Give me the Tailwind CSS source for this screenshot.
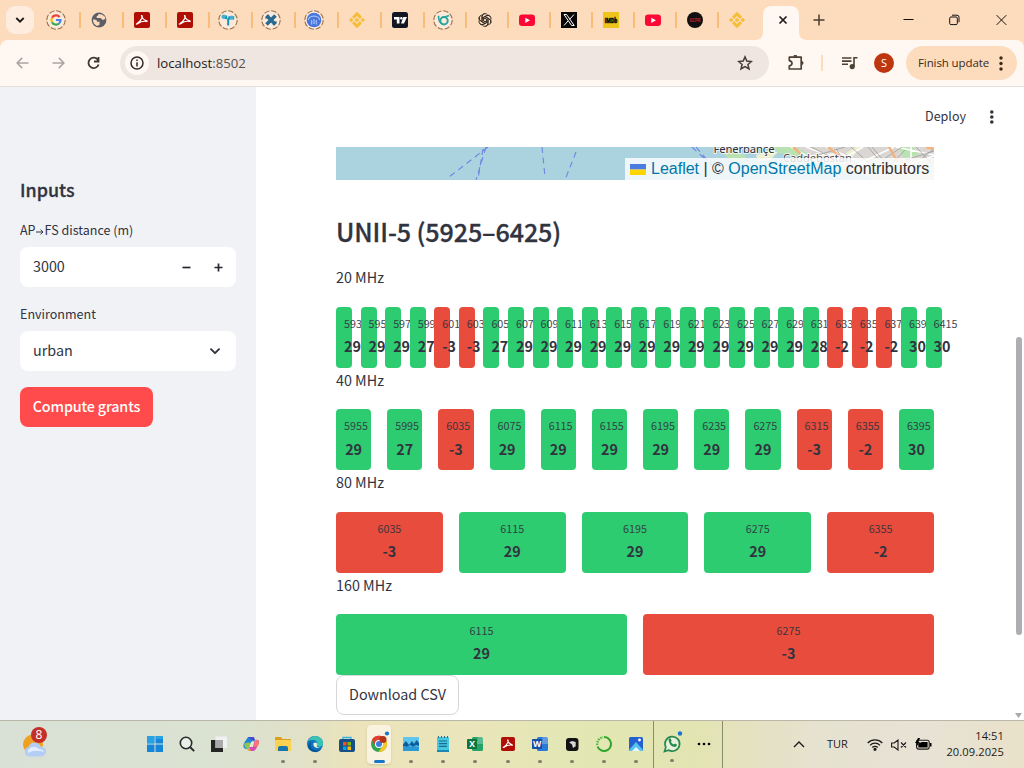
<!DOCTYPE html>
<html lang="en">
<head>
<meta charset="utf-8">
<title>localhost:8502</title>
<script src="https://cdn.jsdelivr.net/npm/@tailwindcss/browser@4"></script>
</head>
<body class="w-[1024px] h-[768px] overflow-hidden flex flex-col bg-white text-[#31333f] font-['Noto_Sans_CJK_SC',sans-serif]">

<!-- Tab strip -->
<div class="h-10 shrink-0 bg-[#fddcbd] flex items-center pl-1.5 font-['Open_Sans',sans-serif]">
  <div class="w-7 h-7 mr-1 rounded-[9px] bg-[#feecdf] flex items-center justify-center">
    <svg width="10" height="8" viewBox="0 0 10 8" fill="none" stroke="#1d1b19" stroke-width="1.9"><path d="M1.3 2 5 5.6 8.700 2"/></svg>
  </div>
  <div id="tabs" class="flex"></div>
  <div class="h-10 w-[52px] -ml-px">
    <svg width="52" height="40" viewBox="0 0 52 40"><path fill="#fff7f2" d="M0 40C5 40 8 37 8 32V15Q8 6 17 6H35Q44 6 44 15V32C44 37 47 40 52 40Z"/><path d="m24.500 16.500 7 7m0-7-7 7" stroke="#1f1b18" stroke-width="1.700"/></svg>
  </div>
  <svg class="ml-1.5" width="12" height="12" viewBox="0 0 12 12" stroke="#4a3d30" stroke-width="1.500"><path d="M6 .5v11M.5 6h11"/></svg>
  <div class="flex items-center ml-auto pr-[17px]">
    <svg class="mr-[35px]" width="11" height="12" viewBox="0 0 11 12" stroke="#111"><path d="M.5 5.500h10"/></svg>
    <svg class="mr-9" width="11" height="12" viewBox="0 0 11 12" fill="none" stroke="#111"><rect x=".7" y="3" width="7.600" height="7.600" rx="1.200"/><path d="M3 1.200h5q2 0 2 2v5"/></svg>
    <svg width="11" height="12" viewBox="0 0 11 12" stroke="#111"><path d="m.6 1.200 9.700 9.700m0-9.700L.6 10.900"/></svg>
  </div>
</div>

<!-- Address bar -->
<div class="bg-[#fddcbd] shrink-0">
<div class="h-[47px] bg-[#fff7f2] rounded-t-lg border-b border-[#e8dfd9] flex items-center font-['Open_Sans',sans-serif]">
  <svg class="ml-4" width="13" height="12" viewBox="0 0 13 12" fill="none" stroke="#aaa4a0" stroke-width="1.500"><path d="M12.500 6H1.200M6.200.9 1.100 6l5.100 5.100"/></svg>
  <svg class="ml-[23px]" width="13" height="12" viewBox="0 0 13 12" fill="none" stroke="#aaa4a0" stroke-width="1.500"><path d="M.5 6h11.300M6.800.9 11.900 6l-5.100 5.100"/></svg>
  <svg class="ml-[22px]" width="13" height="14" viewBox="0 0 13 14" fill="none" stroke="#3f362f" stroke-width="1.800"><path d="M11 4A5.200 5.200 0 1 0 11.600 8.500M11.500 1v4.500H7"/></svg>
  <div class="ml-5 w-[649px] h-[34px] rounded-full bg-[#efe6e2] flex items-center pl-[5px] pr-4">
    <div class="w-6 h-6 rounded-full bg-[#fff7f2] flex items-center justify-center">
      <svg width="14" height="14" viewBox="0 0 14 14" fill="none" stroke="#322b27" stroke-width="1.500"><circle cx="7" cy="7" r="6"/><path d="M7 6.200v4.200M7 3.600v1.500"/></svg>
    </div>
    <span class="ml-2 text-[13.200px] leading-5 text-[#1f1b18]">localhost<span class="text-[#55504c]">:8502</span></span>
    <svg class="ml-auto" width="16" height="16" viewBox="0 0 16 16" fill="none" stroke="#453c36" stroke-width="1.500" stroke-linejoin="miter"><path d="m8 1.900 1.800 4.200 4.600.4-3.500 3 1.100 4.500L8 11.600 4 14l1.100-4.500-3.500-3 4.600-.4z"/></svg>
  </div>
  <svg class="ml-[19px]" width="17" height="17" viewBox="0 0 17 17"><path fill="none" stroke="#4d4034" stroke-width="1.700" stroke-linejoin="round" d="M1.300 2.200H13.200V14H1.300V10.800Q4 10.300 4 8.200T1.300 5.600Z"/><path fill="#4d4034" d="M5.300 1.800a2 2 0 0 1 4 0zM13.500 6a2 2 0 0 1 0 4z"/></svg>
  <div class="ml-4 w-0.5 h-4 bg-[#fddcbd]"></div>
  <svg class="ml-[19px]" width="16" height="13" viewBox="0 0 16 13"><path fill="none" stroke="#4d4034" stroke-width="1.600" d="M0 1h9.500M0 4.100h9.500M0 7.200h6M12 9.500V.8h3.500"/><circle cx="10.200" cy="9.600" r="2.600" fill="#4d4034"/></svg>
  <div class="ml-4 w-5 h-5 rounded-full bg-[#bd360f] text-white text-[11px] leading-5 text-center">S</div>
  <div class="ml-3 w-[111px] h-[34px] rounded-full bg-[#fddcbd] flex items-center pl-3 text-[#3a2a1a]">
    <span class="text-[11.500px] tracking-[-0.1px] whitespace-nowrap w-[81px]">Finish update</span>
    <svg width="4" height="15" viewBox="0 0 4 15" fill="#3a2a1a"><circle cx="2" cy="2" r="1.700"/><circle cx="2" cy="7.500" r="1.700"/><circle cx="2" cy="13" r="1.700"/></svg>
  </div>
</div>
</div>

<!-- Page -->
<div class="h-[633px] shrink-0 flex overflow-hidden">
  <aside class="w-64 shrink-0 bg-[#f0f2f6] px-5 pt-[88px]">
    <h2 class="text-[17.900px] leading-7 font-medium [-webkit-text-stroke:0.3px]">Inputs</h2>
    <p class="mt-4 text-[12.540px] leading-[22px]">AP<span class="inline-flex w-[9px] justify-center"><svg width="8" height="6" viewBox="0 0 8 6" fill="none" stroke="#31333f"><path d="M0 3h7M4.500.6 7 3 4.500 5.400"/></svg></span>FS distance (m)</p>
    <div class="mt-1.5 h-10 rounded-lg bg-white flex items-center pl-[13px] pr-[13px] text-[14.330px]">
      <span class="pb-0.5">3000</span>
      <svg class="ml-auto" width="9" height="9" viewBox="0 0 9 9" stroke="#262730" stroke-width="1.700"><path d="M.5 4.500h8"/></svg>
      <svg class="ml-[23px]" width="9" height="9" viewBox="0 0 9 9" stroke="#262730" stroke-width="1.700"><path d="M.5 4.500h8M4.500.5v8"/></svg>
    </div>
    <p class="mt-4 text-[12.540px] leading-[22px]">Environment</p>
    <div class="mt-1.5 h-10 rounded-lg bg-white flex items-center pl-[13px] pr-4 text-[14.330px]">
      <span class="pb-0.5">urban</span>
      <svg class="ml-auto" width="10" height="7" viewBox="0 0 10 7" fill="none" stroke="#31333f" stroke-width="1.900" stroke-linecap="round" stroke-linejoin="round"><path d="M1 1.200 5 5.200 9 1.200"/></svg>
    </div>
    <button class="mt-4 w-[133px] h-10 pb-0.5 rounded-lg bg-[#ff4b4b] text-white text-[14.330px] tracking-[-0.15px] font-medium whitespace-nowrap">Compute grants</button>
  </aside>

  <main class="w-[758px] shrink-0 pl-20 pr-20">
    <header class="h-[60px] -mr-[62px] flex items-center justify-end text-[12.540px]">
      <span class="pb-0.5">Deploy</span>
      <svg class="ml-[23px] mr-0.5" width="5" height="14" viewBox="0 0 5 14" fill="#31333f"><circle cx="2.800" cy="2" r="1.800"/><circle cx="2.800" cy="7" r="1.800"/><circle cx="2.800" cy="12" r="1.800"/></svg>
    </header>

    <div class="relative w-[598px] h-[33px] overflow-hidden">
      <svg width="598" height="33" viewBox="0 0 598 33">
        <rect width="598" height="33" fill="#aad3df"/>
        <g fill="none" stroke="#7182e2" stroke-width="1.100" stroke-dasharray="6 4.500"><path d="M152 0 113 30M150 0 140 33M147 2 142 32M206 0 209 30M240 5 229 33M356 0 370 13M360 0 384 28"/></g>
        <path fill="#d9d6d3" d="M440 0H598V33H540L520 24 492 17 480 13 465 5 452 3Z"/>
        <path fill="#b9e2b3" d="M436 0h24l16 9-9 3-14-4-10-2zM388 7l12-3 10 5-4 6-12-2zM562 1l14-2 8 9-16 3z"/>
        <path fill="#edf0cf" d="m420 8 12-4 10 1-8 8-12 1zM510 6l10-6 5 0-10 12z"/>
        <g fill="none" stroke="#fff" stroke-width="1.500"><path d="M470 0l35 13 22-13M490 0l50 22M520 18l38-18M540 13l30 5 28-9M560 0l38 8M575 0v18M455 0l16 9 29-2"/></g>
        <g fill="none" stroke="#96928f" stroke-width=".7"><path d="M475 0l30 15M482 8l27-8M532 0l12 14M536 0l12 14M548 12l18-12M570 13l28-9M580 0l16 17M556 17l13-14M500 2l8 12M515 0l18 16M585 12l13-10"/></g>
        <g fill="none" stroke="#f3b27c" stroke-width="2.500"><path d="M457 0l9 8M492 0l14 11M553 0l8 14M590 0l8 2"/></g>
        <g fill="#2e3034" stroke="#fff" stroke-width="1.800" stroke-opacity=".8" paint-order="stroke" font-family="Noto Sans, sans-serif" font-size="11.300"><text x="377.500" y="5.500" textLength="61">Fenerbahçe</text><text x="447" y="14.500" textLength="69" fill="#4d4848">Caddebostan</text></g>
      </svg>
      <div class="absolute right-0 bottom-0 w-[309px] h-[22px] bg-white/80 flex items-center pl-[5px] font-['Liberation_Sans',sans-serif] text-[16px] leading-[22px] whitespace-nowrap text-[#333]">
        <svg class="mr-[5px]" width="16" height="11" viewBox="0 0 16 11"><path fill="#4c7be1" d="M0 0h16v5.500H0z"/><path fill="#ffd500" d="M0 5.500h16V11H0z"/></svg>
        <span><span class="text-[#0078a8]">Leaflet</span> | © <span class="text-[#0078a8]">OpenStreetMap</span> contributors</span>
      </div>
    </div>

    <h3 class="mt-[35.800px] mb-4 h-[33.600px] text-[25.080px] leading-[31.600px] tracking-[-0.1px] font-medium [-webkit-text-stroke:0.3px] whitespace-nowrap">UNII-5 (5925–6425)</h3>
    <div id="bands"></div>
    <button class="w-[123px] h-10 pb-0.5 rounded-lg border border-[#d6d6d9] bg-white text-[14.330px] whitespace-nowrap">Download CSV</button>
  </main>

  <div class="w-2.5 flex flex-col items-center pt-[250px] pr-px">
    <div class="w-1.5 h-[298px] rounded-full bg-[#adadb2]"></div>
    <svg class="mt-[78px]" width="7" height="5" viewBox="0 0 7 5" fill="#aaa"><path d="M0 0h7L3.500 5z"/></svg>
  </div>
</div>

<!-- Taskbar -->
<div class="h-12 shrink-0 border-t border-[#b9b8a8] bg-[linear-gradient(90deg,#d9e1d6_0%,#dbe2d1_22%,#e0e1c8_29%,#ece3ba_35%,#ebe5bb_45%,#e2e7b4_56%,#e2e5b2_68%,#e5e1c2_74%,#e6e2d0_80%,#e7e2d5_90%,#e9e1c9_100%)] flex font-['Open_Sans',sans-serif] text-[#1b1b1b]">
  <div class="w-[139px] pl-[22px] pt-[5px]">
    <svg width="28" height="34" viewBox="0 0 28 34"><circle cx="11" cy="18.500" r="10" fill="#f0a021"/><path fill="#b4cdf5" d="M7 30.500a5 5 0 0 1-.3-9.800 6.500 6.500 0 0 1 12-.2 5 5 0 0 1 .6 10z"/><path fill="#e2ecff" d="M6 24q5-6 11-1 4 0 5 3-9-3-16 1z"/><circle cx="17" cy="9" r="8" fill="#c23028"/><text x="17" y="13.300" font-size="12" fill="#fff" text-anchor="middle" font-family="Open Sans, sans-serif">8</text></svg>
  </div>
  <div id="dock" class="flex"></div>
  <div class="ml-px w-[70px] border-x border-[#8b8b70] flex">
    <div class="w-9 flex flex-col items-center pt-2.5">
      <svg class="overflow-visible" width="18" height="26" viewBox="0 0 18 26"><path d="m1.500 20.500 1.300-4.300a7.300 7.300 0 1 1 2.700 2.900z" fill="#e8f1db" stroke="#258a50" stroke-width="1.700"/><path fill="#258a50" d="M5.500 8.500q1-2 2.200-.7l1 2-.8 1.300q1 1.900 2.900 2.500l1.200-1 2 1.200q.2 2-2.400 2.200-5.500-.8-6.100-7.500"/><circle cx="17" cy="2.500" r="2.200" fill="#1876d0"/></svg>
      <div class="w-1 h-[3px] rounded bg-[#807f6c] mt-[2px]"></div>
    </div>
    <svg class="mt-[21px] ml-[7px]" width="14" height="4" viewBox="0 0 14 4"><circle cx="2" cy="2" r="1.300"/><circle cx="7" cy="2" r="1.300"/><circle cx="12" cy="2" r="1.300"/></svg>
  </div>
  <div class="ml-auto pr-5 flex items-center">
    <svg width="12" height="7" viewBox="0 0 12 7" fill="none" stroke="#1b1b1b" stroke-width="1.400"><path d="m1 6 5-5 5 5"/></svg>
    <span class="ml-[22px] text-[11px] w-[24px]">TUR</span>
    <svg class="ml-4" width="16" height="13" viewBox="0 0 16 13" fill="none" stroke="#1b1b1b" stroke-width="1.200"><path d="M.7 5a10.300 10.300 0 0 1 14.600 0M3 7.300a7 7 0 0 1 10 0M5.300 9.500a3.800 3.800 0 0 1 5.400 0"/><circle cx="8" cy="11.300" r="1" fill="#1b1b1b"/></svg>
    <svg class="ml-2" width="16" height="12" viewBox="0 0 16 12" fill="none" stroke="#1b1b1b" stroke-width="1.100"><path d="M.6 4h2.600L7 1v10L3.200 8H.6zM10 3.500l5 5m0-5-5 5"/></svg>
    <svg class="ml-2" width="17" height="13" viewBox="0 0 17 13"><rect x="1.600" y="2.300" width="12.600" height="8.800" rx="2" fill="none" stroke="#1b1b1b" stroke-width="1.100"/><path d="M3.300 5.500 7 4h5.600v5.500H3.300zM15 5h1.500v3.500H15zM3 0 0 5h2l-1 4 4-5H3.500L5 0z"/></svg>
    <div class="ml-[13px] pb-0.5 w-[59px] text-right text-[11.100px] leading-4 tracking-[0.1px] whitespace-nowrap"><div>14:51</div><div class="-ml-2">20.09.2025</div></div>
  </div>
</div>

<script>
const dashed = c => `<circle cx="10" cy="10" r="9.200" fill="#fdeadb" stroke="#98704a" stroke-width="1.100" stroke-dasharray="5.500 1.700"/>${c}`;
const pdf = '<rect x="2" y="2" width="16" height="16" rx="2" fill="#b00d05"/><path d="M9.500 5.500c2 0 0 5.500-5 8.500 1 1 3-4 10.500-2.500 1-1-5-1-5.500-6z" fill="none" stroke="#fff" stroke-width="1.200"/>';
const bnb = '<g fill="#f3bf3a"><path d="m10 1.800 5 5-2.100 2.100L10 6 7.100 8.900 5 6.800zM10 18.200l5-5-2.100-2.100L10 14l-2.900-2.900L5 13.200zM10 7.700l2.300 2.300-2.300 2.300L7.700 10zM4.200 7.800 6.400 10l-2.200 2.200L2 10zM15.800 7.800 18 10l-2.200 2.200-2.200-2.200z"/></g>';
const yt = '<rect x="2" y="4.500" width="16" height="11.500" rx="3.200" fill="#fb0836"/><path d="m8.300 7.700 4.700 2.600-4.700 2.600z" fill="#fff"/>';
const petals = [0,60,120,180,240,300].map(a => `<path transform="rotate(${a} 10 10)" d="M6.400 12V6.200q0-2.700 2.800-3.500 2.400-.4 3.800 1.300M8.300 11V7.200l3.700-2.100q2.700-1.200 4.300 1"/>`).join('');
const tabs = [
 dashed('<g fill="none" stroke-width="2.200"><path d="M13.700 7.200A4.600 4.600 0 0 0 6 7.800" stroke="#ea4335"/><path d="M6 7.800a4.600 4.600 0 0 0 0 4.400" stroke="#fbbc05"/><path d="M6 12.200a4.600 4.600 0 0 0 7 1.300" stroke="#34a853"/><path d="M13 13.500q1.600-1.500 1.500-3.500H10" stroke="#4285f4"/></g>'),
 '<circle cx="10" cy="10" r="7.400" fill="#5c5f66"/><path fill="#fddcbd" d="M4 9.500q4-.5 4 2.300h2.500v3L8 16Q4 14 4 9.500M9.500 4q0 2-1.800 2.200v1.900h4l2 1.800 2.500-1V7L13 4.500z"/>',
 pdf, pdf,
 dashed('<path d="M3.800 8.200V5.500h5.400v10h2V9.500h5V6.300h-5.500l-1.500 3" fill="#1492b8"/><circle cx="5.700" cy="6.500" r="2" fill="#47b1d0"/><circle cx="13.600" cy="7.500" r="2" fill="#47b1d0"/>'),
 dashed('<path d="m5.500 5.500 9 9M14.500 5.500l-9 9" stroke="#286b92" stroke-width="3.600"/><path d="M4.500 8.500 8 5M12 15l3.500-3.500" stroke="#286b92" stroke-width="1.500"/>'),
 dashed('<circle cx="10" cy="10" r="7.300" fill="#4776dd"/><path d="M4.500 10q0-3.500 5.500-4 5.500.5 5.500 4M7.700 14.500V10M12.300 14.500V10M10 14V9" fill="none" stroke="#aec6ff" stroke-width="1.100"/>'),
 bnb,
 '<rect x="2" y="2" width="16" height="16" rx="2.500" fill="#131722"/><path d="M4 7h5.500v6.500H6.800V9.500H4zM13.300 7H17l-3 6.500h-3z" fill="#fff"/><circle cx="11.300" cy="8.200" r="1.200" fill="#fff"/>',
 dashed('<circle cx="11" cy="10.800" r="3.700" fill="none" stroke="#26a6a2" stroke-width="2"/><path d="M5.500 5.800q0 7 4.500 8.500M10 7.500q3.500-1 6-2" fill="none" stroke="#26a6a2" stroke-width="1.700"/>'),
 `<g fill="none" stroke="#2c2620" stroke-width="1" transform="translate(1.300 1.300) scale(.87)">${petals}</g>`,
 yt,
 '<path d="M2 2h16v16H2z" fill="#070707"/><path d="M5 4.500h2.600l7.600 11h-2.600zM15 4.500l-4.500 5M9 11l-4 4.500" fill="none" stroke="#fff" stroke-width="1"/>',
 '<path d="M2 2h16v16H2z" fill="#f0c51b"/><text x="3.800" y="12.500" font-size="6.500" font-weight="900" textLength="12.400" lengthAdjust="spacingAndGlyphs" font-family="Roboto" stroke="#111" stroke-width=".4">IMDb</text>',
 yt,
 '<circle cx="10" cy="10" r="8" fill="#111"/><text x="4.500" y="11.800" font-size="4.500" font-weight="700" textLength="11" lengthAdjust="spacingAndGlyphs" font-family="Roboto" fill="#bd2430">GCPR</text>',
 bnb];
document.getElementById('tabs').innerHTML = tabs.map((s, i) =>
 `<div class="${i < 9 ? 'w-[43px]' : i < 16 ? 'w-[42px]' : 'w-[37px]'} h-5 pl-2 flex items-center justify-between"><svg width="20" height="20" viewBox="0 0 20 20">${s}</svg>${i < 16 ? '<i class="w-0.5 h-4 bg-[#f8be79]"></i>' : ''}</div>`).join('');

const bands = [
 ['20 MHz', 5935, 20, [29,29,29,27,-3,-3,27,29,29,29,29,29,29,29,29,29,29,29,29,28,-2,-2,-2,30,30]],
 ['40 MHz', 5955, 40, [29,27,-3,29,29,29,29,29,29,-3,-2,30]],
 ['80 MHz', 6035, 80, [-3,29,29,29,-2]],
 ['160 MHz', 6115, 160, [29,-3]]];
document.getElementById('bands').innerHTML = bands.map(([name, start, step, vals]) =>
 `<p class="h-[25.600px] leading-[23.200px] mb-4 text-[14.330px]">${name}</p><div class="flex gap-4 w-[598px]">` + vals.map((v, i) =>
 `<div class="flex-1 basis-0 min-w-0 isolate"><div class="min-w-4 h-[60.800px] rounded p-2 flex flex-col text-center ${v < 0 ? 'bg-[#e74c3c]' : 'bg-[#2ecc71]'}"><span class="text-[10.750px] h-[19.200px] leading-[17px] opacity-90">${start + i * step}</span><b class="text-[14.330px] h-[25.600px] leading-[23.400px] font-bold whitespace-nowrap">${v}</b></div></div>`).join('') + '</div>').join('');

const win = (a, b, t) => `<rect x="6" y="2" width="11" height="14" rx="1.500" fill="${a}"/><path d="M11.500 2H17v7H6v-3h5.500z" fill="#fff" fill-opacity=".25"/><rect x="1" y="4" width="10" height="10" rx="1" fill="${b}"/><text x="6" y="12" font-size="8.500" font-weight="700" fill="#fff" text-anchor="middle" font-family="Open Sans">${t}</text>`;
const dock = [
 ['<path d="M1 1h7.500v7.500H1zM9.500 1H17v7.500H9.500zM1 9.500h7.500V17H1zM9.500 9.500H17V17H9.500z" fill="#1687d8"/><path d="M1 1h7.500v7.500H1zM9.500 1H17v3H9.500z" fill="#36b4ee" fill-opacity=".6"/>'],
 ['<circle cx="8" cy="8" r="5.700" fill="#e9eee6" stroke="#28292b" stroke-width="1.600"/><path d="m12 12 4.200 4.200" stroke="#28292b" stroke-width="1.900"/>'],
 ['<path d="M1 5h12v12H1z" fill="#252525"/><path d="M5.500 1.500H17V13H5.500z" fill="#f1f1f1"/><path d="M5.500 5H13v8H5.500z" fill="#aaa"/>'],
 ['<path d="M6 2h5l2 4-4 1-3 7H4q-4-1-2-6z" fill="#2087d6"/><path d="M2 8.500 3 12q1 2 3 2l3-6-3-.5z" fill="#8fc653"/><path d="M8 16h4l2-2 3-6q1-4-4-3l-2 7H7z" fill="#d64cb5"/><path d="M13 5h2q3 1 1 6l-4 1z" fill="#fa776a"/><path d="M6 2h6l1 3H9z" fill="#444dce"/><path d="m9.700 6.500-2 5h1.500l2-5z" fill="#eee8d8"/><path d="M5 14h3l1 2H7q-1.500 0-2-2" fill="#f3a23b"/>'],
 ['<path d="M1 3q0-1 1-1h5l1.500 2H16q1 0 1 1v3H1z" fill="#dda01d"/><rect x="1" y="5" width="16" height="11" rx="1" fill="#fbd152"/><path d="M4 16v-3q0-2 2-2h6q2 0 2 2v3z" fill="#1676ad"/>',1],
 ['<circle cx="9" cy="9" r="8" fill="#0d74be"/><path d="M2 6Q5 0 11 1.200q7 1.800 6 8.300-1 3-5 2-2-.5-.7-2.200Q11 5 7 5 3.500 5 2 6" fill="#39c1b5"/><path d="M5 6.500q-2 6 3.500 8.500 4 1 7-1-4 5-10 2Q-1 12 5 6.500" fill="#075494"/><path d="M7.500 8q-1 4 3.500 5l4-.5q-6 .5-3.500-3.500Q10 6.500 7.500 8" fill="#e5f1d8"/>',1],
 ['<path d="M5 5V2.500h8V5" fill="none" stroke="#35b2e8" stroke-width="1.300"/><rect x="1" y="4" width="16" height="13" rx="2" fill="#144f86"/><path d="M5 7h3.500v3.500H5z" fill="#f25022"/><path d="M9.500 7H13v3.500H9.500z" fill="#7fba00"/><path d="M5 11.500h3.500V15H5z" fill="#00a4ef"/><path d="M9.500 11.500H13V15H9.500z" fill="#ffb900"/>',0],
 ['<circle cx="9" cy="9" r="8" fill="#32a350"/><path d="M9 9 2 5a8 8 0 0 1 14 0z" fill="#df4032"/><path d="M9 5h7a8 8 0 0 1-7.500 12L12.500 11z" fill="#f7c52c"/><path d="M2 5q3-5 9-4 4 1 5 4H9L5.500 11z" fill="#df4032"/><circle cx="9" cy="9" r="4" fill="#fff"/><circle cx="9" cy="9" r="3" fill="#3d7de0"/><circle cx="13" cy="4.500" r="3.500" fill="#b53416"/><circle cx="17" cy="-1.500" r="2.100" fill="#1876d0"/>',2],
 ['<rect x="1" y="2" width="16" height="14" fill="#5fc6ee"/><path d="M1 9.500 4 6l3 4 3-4 2 3 2.500-4L17 8v3l-3-1-3 2-3-2-3 2-4-1z" fill="#0b5d9e"/><path d="m1 11 3 1 3-1 3 1 3-1 4 1v4H1z" fill="#299ad6"/>',1],
 ['<rect x="3" y="2" width="12" height="14" rx="1" fill="#45c7df"/><path d="M5 6h8M5 8.700h8M5 11.400h8" stroke="#166d91" stroke-width="1.200"/><path d="M4.500 1v2M7.500 1v2M10.500 1v2M13.500 1v2" stroke="#356b80"/><path d="M3 15h12v2H3z" fill="#1c87b5"/>',1],
 [win('#24a268','#107441','X'),1],
 [`<g transform="translate(.3 .3) scale(.87)">${pdf}</g>`,1],
 [win('#2b79d7','#174ea6','W'),1],
 ['<rect x="3" y="3" width="12.500" height="13" rx="3" fill="#121212"/><path d="m6 7.300 3.300-1.300L12.700 7v4.300L10 13l-1-3.500z" fill="#d5d5d5"/>',1],
 ['<path d="M9 2a7 7 0 1 1-6.500 9.500" fill="none" stroke="#2ea62b" stroke-width="2"/><path d="M2.300 10A7 7 0 0 1 8 2.200" fill="none" stroke="#58b940" stroke-width="2.400" stroke-dasharray="1.500 1"/>',1],
 ['<rect x="2" y="2" width="14" height="14" rx="1.500" fill="#2561ce"/><path d="m2 15 7-8 7 8q0 1-1.500 1h-11q-1.500 0-1.500-1" fill="#54c4ef"/><path d="m5 16 4-4 4 4z" fill="#e6f7ff"/><circle cx="12.500" cy="5" r="1.400" fill="#fff"/>',1]];
document.getElementById('dock').innerHTML = dock.map(([s, m]) =>
 `<div class="w-[32.060px] flex flex-col items-center pt-1"><div class="${m === 2 ? 'w-6 h-[39px] rounded bg-[#f8f2df] shadow-sm' : 'w-6 h-[39px]'} flex flex-col items-center pt-2.5"><svg class="overflow-visible" width="18" height="18" viewBox="0 0 18 18">${s}</svg><i class="${m === 2 ? 'mt-[7px] w-[11px] h-[3px] rounded-full bg-[#1876c9]' : m ? 'mt-[7px] w-1 h-[3px] rounded-full bg-[#807f6c]' : ''}"></i></div></div>`).join('');
</script>
</body>
</html>
